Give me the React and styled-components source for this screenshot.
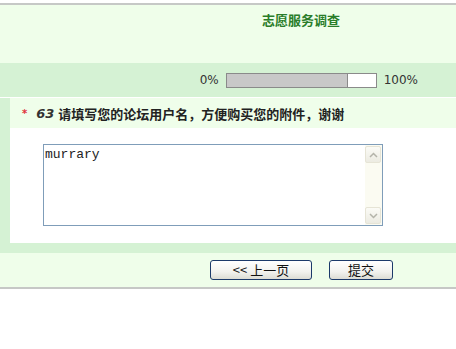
import styled, { createGlobalStyle } from "styled-components";

const GlobalStyle = createGlobalStyle`
    body {
        margin: 0;
        background: #fff;
        font-family: "DejaVu Sans", "Noto Sans CJK SC", sans-serif;
    }
`;

const Page = styled.div`
    margin-top: 3px;
    border-top: 2px solid #c6c8c6;
    border-bottom: 2px solid #c6c8c6;
`;

const Header = styled.div`
    height: 58px;
    background-color: #effeea;
    padding-left: 146px;
    display: flex;
    justify-content: center;
    h1 {
        margin: 6px 0 0;
        font-size: 13px;
        line-height: 17px;
        font-weight: bold;
        color: #2a7d2a;
        font-family: "Noto Sans CJK SC", sans-serif;
    }
`;

const ProgressBand = styled.div`
    height: 34px;
    background-color: #d5f2d4;
    display: flex;
    align-items: center;
    justify-content: flex-end;
    gap: 7px;
    padding-right: 38px;
    font-size: 12px;
    color: #333;
`;

const Bar = styled.div`
    width: 149px;
    height: 13px;
    border: 1px solid #8a8a8a;
    background-color: #fff;
    div {
        height: 100%;
        background-color: #c8c8c8;
        border-right: 1px solid #8a8a8a;
    }
`;

const Question = styled.div`
    margin-top: 1px;
    border-left: 10px solid #d5f2d4;
    border-bottom: 10px solid #d5f2d4;
`;

const QuestionTitle = styled.div`
    height: 30px;
    background-color: #effeea;
    display: flex;
    align-items: center;
    padding-left: 12px;
    font-size: 13px;
    font-weight: bold;
    color: #222;
    .star {
        color: #e0303a;
        font-size: 10px;
        margin-right: 9px;
    }
    .num {
        font-style: italic;
        color: #333;
        margin-right: 4px;
    }
    .text {
        font-family: "Noto Sans CJK SC", sans-serif;
    }
`;

const QuestionBody = styled.div`
    background-color: #fff;
    padding: 16px 0 17px 33px;
`;

const TextBox = styled.div`
    width: 338px;
    height: 80px;
    border: 1px solid #7f9db9;
    display: flex;
    textarea {
        flex: 1;
        border: none;
        outline: none;
        resize: none;
        overflow: hidden;
        padding: 2px 1px;
        font-family: "Liberation Mono", monospace;
        font-size: 13px;
        line-height: 15px;
        color: #222;
    }
`;

const ScrollTrack = styled.div`
    width: 16px;
    background-color: #fbfbf2;
    display: flex;
    flex-direction: column;
    justify-content: space-between;
    padding: 1px 1px 1px 0;
`;

const ScrollButton = styled.div`
    height: 15px;
    border: 1px solid #e6e4d6;
    border-radius: 2px;
    background: linear-gradient(#fbfbf6, #ecebe2);
    display: flex;
    align-items: center;
    justify-content: center;
`;

const Footer = styled.div`
    height: 34px;
    background-color: #effeea;
    display: flex;
    align-items: center;
    gap: 17px;
    padding-left: 210px;
`;

const Button = styled.button`
    width: ${p => p.$w}px;
    height: 20px;
    padding: 0;
    border: 1px solid #1c3a6a;
    border-radius: 3px;
    background: linear-gradient(#ffffff, #f2f2ee 60%, #dcdcd4);
    font-family: "Noto Sans CJK SC", sans-serif;
    font-size: 13px;
    line-height: 16px;
    color: #111;
`;

const Arrow = ({ up }) => (
    <svg width="9" height="6" viewBox="0 0 9 6">
        <path d={up ? "M1 5 L4.5 1.5 L8 5" : "M1 1 L4.5 4.5 L8 1"} fill="none" stroke="#b4b4aa" strokeWidth="1.5" />
    </svg>
);

const App = () => (
    <>
        <GlobalStyle />
        <Page>
            <Header>
                <h1>志愿服务调查</h1>
            </Header>
            <ProgressBand>
                <span>0%</span>
                <Bar><div style={{ width: `${(120 / 149) * 100}%` }} /></Bar>
                <span>100%</span>
            </ProgressBand>
            <Question>
                <QuestionTitle>
                    <span className="star">*</span>
                    <span className="num">63</span>
                    <span className="text">请填写您的论坛用户名，方便购买您的附件，谢谢</span>
                </QuestionTitle>
                <QuestionBody>
                    <TextBox>
                        <textarea defaultValue="murrary" />
                        <ScrollTrack>
                            <ScrollButton><Arrow up /></ScrollButton>
                            <ScrollButton><Arrow /></ScrollButton>
                        </ScrollTrack>
                    </TextBox>
                </QuestionBody>
            </Question>
            <Footer>
                <Button $w={102}>&lt;&lt; 上一页</Button>
                <Button $w={64}>提交</Button>
            </Footer>
        </Page>
    </>
);

export default App;
